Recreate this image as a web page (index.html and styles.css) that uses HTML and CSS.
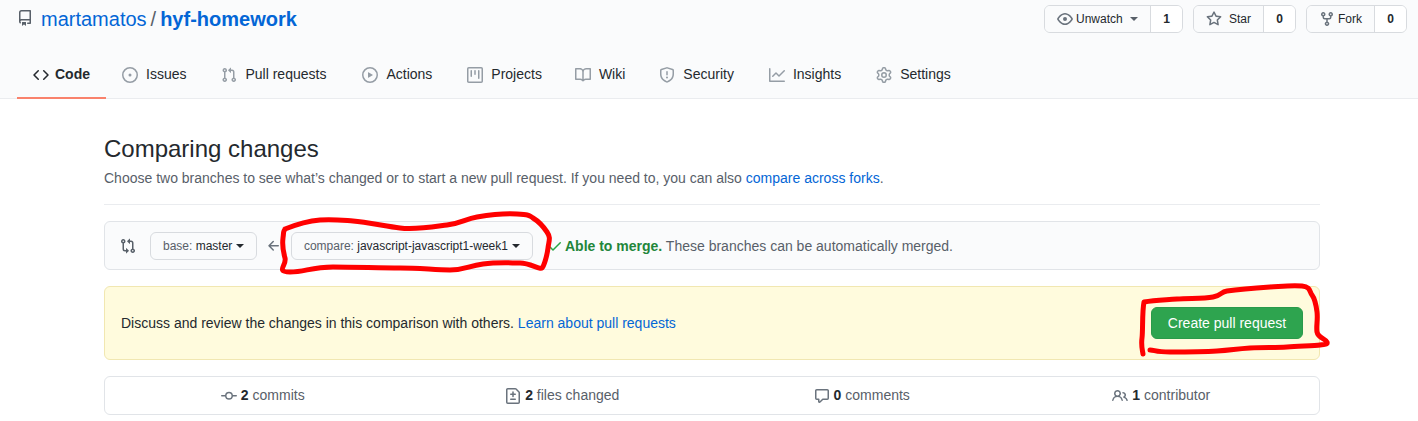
FILE: index.html
```html
<!DOCTYPE html>
<html lang="en">
<head>
<meta charset="utf-8">
<title>Comparing changes</title>
<link rel="stylesheet" href="styles.css">
</head>
<body>
<svg class="defs" width="0" height="0" aria-hidden="true">
  <symbol id="i-repo" viewBox="0 0 16 16"><path d="M2 2.5A2.5 2.5 0 014.5 0h8.75a.75.75 0 01.75.75v12.5a.75.75 0 01-.75.75h-2.5a.75.75 0 110-1.5h1.75v-2h-8a1 1 0 00-.714 1.7.75.75 0 01-1.072 1.05A2.495 2.495 0 012 11.5v-9zm10.5-1V9h-8c-.356 0-.694.074-1 .208V2.5a1 1 0 011-1h8zM5 12.25v3.25a.25.25 0 00.4.2l1.45-1.087a.25.25 0 01.3 0L8.6 15.7a.25.25 0 00.4-.2v-3.25a.25.25 0 00-.25-.25h-3.5a.25.25 0 00-.25.25z"/></symbol>
  <symbol id="i-code" viewBox="0 0 16 16"><path d="M4.72 3.22a.75.75 0 011.06 1.06L2.06 8l3.72 3.72a.75.75 0 11-1.06 1.06L.47 8.53a.75.75 0 010-1.06l4.25-4.25zm6.56 0a.75.75 0 10-1.06 1.06L13.94 8l-3.72 3.72a.75.75 0 101.06 1.06l4.25-4.25a.75.75 0 000-1.06l-4.25-4.25z"/></symbol>
  <symbol id="i-issue" viewBox="0 0 16 16"><path d="M8 9.5a1.5 1.5 0 100-3 1.5 1.5 0 000 3z"/><path d="M8 0a8 8 0 100 16A8 8 0 008 0zM1.5 8a6.5 6.5 0 1113 0 6.5 6.5 0 01-13 0z"/></symbol>
  <symbol id="i-pr" viewBox="0 0 16 16"><path d="M7.177 3.073L9.573.677A.25.25 0 0110 .854v4.792a.25.25 0 01-.427.177L7.177 3.427a.25.25 0 010-.354zM3.75 2.5a.75.75 0 100 1.5.75.75 0 000-1.5zm-2.25.75a2.25 2.25 0 113 2.122v5.256a2.251 2.251 0 11-1.5 0V5.372A2.25 2.25 0 011.5 3.25zM11 2.5h-1V4h1a1 1 0 011 1v5.628a2.251 2.251 0 101.5 0V5A2.5 2.5 0 0011 2.5zm1 10.25a.75.75 0 111.5 0 .75.75 0 01-1.5 0zM3.75 12a.75.75 0 100 1.5.75.75 0 000-1.5z"/></symbol>
  <symbol id="i-play" viewBox="0 0 16 16"><path d="M1.5 8a6.5 6.5 0 1113 0 6.5 6.5 0 01-13 0zM8 0a8 8 0 100 16A8 8 0 008 0zM6.379 5.227A.25.25 0 006 5.442v5.117a.25.25 0 00.379.214l4.264-2.559a.25.25 0 000-.428L6.379 5.227z"/></symbol>
  <symbol id="i-project" viewBox="0 0 16 16"><path d="M1.75 0A1.75 1.75 0 000 1.75v12.5C0 15.216.784 16 1.75 16h12.5A1.75 1.75 0 0016 14.25V1.75A1.75 1.75 0 0014.25 0H1.75zM1.5 1.75a.25.25 0 01.25-.25h12.5a.25.25 0 01.25.25v12.5a.25.25 0 01-.25.25H1.75a.25.25 0 01-.25-.25V1.75zM11.75 3a.75.75 0 00-.75.75v7.5a.75.75 0 001.5 0v-7.5a.75.75 0 00-.75-.75zm-8.25.75a.75.75 0 011.5 0v5.5a.75.75 0 01-1.5 0v-5.5zM8 3a.75.75 0 00-.75.75v3.5a.75.75 0 001.5 0v-3.5A.75.75 0 008 3z"/></symbol>
  <symbol id="i-book" viewBox="0 0 16 16"><path d="M0 1.75A.75.75 0 01.75 1h4.253c1.227 0 2.317.59 3 1.501A3.744 3.744 0 0111.006 1h4.245a.75.75 0 01.75.75v10.5a.75.75 0 01-.75.75h-4.507a2.25 2.25 0 00-1.591.659l-.622.621a.75.75 0 01-1.06 0l-.622-.621A2.25 2.25 0 005.258 13H.75a.75.75 0 01-.75-.75V1.75zm8.755 3a2.25 2.25 0 012.25-2.25H14.5v9h-3.757c-.71 0-1.4.201-1.992.572l.004-7.322zm-1.504 7.324l.004-5.073-.002-2.253A2.25 2.25 0 005.003 2.5H1.5v9h3.757a3.75 3.75 0 011.994.574z"/></symbol>
  <symbol id="i-shield" viewBox="0 0 16 16"><path d="M7.467.133a1.75 1.75 0 011.066 0l5.25 1.68A1.75 1.75 0 0115 3.48V7c0 1.566-.32 3.182-1.303 4.682-.983 1.498-2.585 2.813-5.032 3.855a1.7 1.7 0 01-1.33 0c-2.447-1.042-4.049-2.357-5.032-3.855C1.32 10.182 1 8.566 1 7V3.48a1.75 1.75 0 011.217-1.667l5.25-1.68zm.61 1.429a.25.25 0 00-.153 0l-5.25 1.68a.25.25 0 00-.174.238V7c0 1.358.275 2.666 1.057 3.86.784 1.194 2.121 2.34 4.366 3.297a.2.2 0 00.154 0c2.245-.956 3.582-2.104 4.366-3.298C13.225 9.666 13.5 8.36 13.5 7V3.48a.25.25 0 00-.174-.237l-5.25-1.68zM9 10.5a1 1 0 11-2 0 1 1 0 012 0zm-.25-5.75a.75.75 0 10-1.5 0v3a.75.75 0 001.5 0v-3z"/></symbol>
  <symbol id="i-graph" viewBox="0 0 16 16"><path d="M1.5 1.75a.75.75 0 00-1.5 0v12.5c0 .414.336.75.75.75h14.5a.75.75 0 000-1.5H1.5V1.75zm14.28 2.53a.75.75 0 00-1.06-1.06L10 7.94 7.53 5.47a.75.75 0 00-1.06 0L3.22 8.72a.75.75 0 001.06 1.06L7 7.06l2.47 2.47a.75.75 0 001.06 0l5.25-5.25z"/></symbol>
  <symbol id="i-gear" viewBox="0 0 16 16"><path d="M7.429 1.525a6.593 6.593 0 011.142 0c.036.003.108.036.137.146l.289 1.105c.147.56.55.967.997 1.189.174.086.341.183.501.29.417.278.97.423 1.53.27l1.102-.303c.11-.03.175.016.195.046.219.31.41.641.573.989.014.031.022.11-.059.19l-.815.806c-.411.406-.562.957-.53 1.456a4.588 4.588 0 010 .582c-.032.499.119 1.05.53 1.456l.815.806c.08.08.073.159.059.19a6.494 6.494 0 01-.573.99c-.02.029-.086.074-.195.045l-1.103-.303c-.559-.153-1.112-.008-1.529.27-.16.107-.327.204-.5.29-.449.222-.851.628-.998 1.189l-.289 1.105c-.029.11-.101.143-.137.146a6.613 6.613 0 01-1.142 0c-.036-.003-.108-.037-.137-.146l-.289-1.105c-.147-.56-.55-.967-.997-1.189a4.502 4.502 0 01-.501-.29c-.417-.278-.97-.423-1.53-.27l-1.102.303c-.11.03-.175-.016-.195-.046a6.492 6.492 0 01-.573-.989c-.014-.031-.022-.11.059-.19l.815-.806c.411-.406.562-.957.53-1.456a4.587 4.587 0 010-.582c.032-.499-.119-1.05-.53-1.456l-.815-.806c-.08-.08-.073-.159-.059-.19a6.44 6.44 0 01.573-.99c.02-.029.086-.075.195-.045l1.103.303c.559.153 1.112.008 1.529-.27.16-.107.327-.204.5-.29.449-.222.851-.628.998-1.189l.289-1.105c.029-.11.101-.143.137-.146zM8 0c-.236 0-.47.01-.701.03-.743.065-1.29.615-1.458 1.261l-.29 1.106c-.017.066-.078.158-.211.224a5.994 5.994 0 00-.668.386c-.123.082-.233.09-.3.071L3.27 2.776c-.644-.177-1.392.02-1.82.63a7.977 7.977 0 00-.704 1.217c-.315.675-.111 1.422.363 1.891l.815.806c.05.048.098.147.088.294a6.084 6.084 0 000 .772c.01.147-.038.246-.088.294l-.815.806c-.474.469-.678 1.216-.363 1.891.2.428.436.835.704 1.218.428.609 1.176.806 1.82.63l1.103-.303c.066-.019.176-.011.299.071.213.143.436.272.668.386.133.066.194.158.212.224l.289 1.106c.169.646.715 1.196 1.458 1.26a8.094 8.094 0 001.402 0c.743-.064 1.29-.614 1.458-1.26l.29-1.106c.017-.066.078-.158.211-.224a5.98 5.98 0 00.668-.386c.123-.082.233-.09.3-.071l1.102.302c.644.177 1.392-.02 1.82-.63.268-.382.505-.789.704-1.217.315-.675.111-1.422-.364-1.891l-.814-.806c-.05-.048-.098-.147-.088-.294a6.1 6.1 0 000-.772c-.01-.147.039-.246.088-.294l.814-.806c.475-.469.679-1.216.364-1.891a7.992 7.992 0 00-.704-1.218c-.428-.609-1.176-.806-1.82-.63l-1.103.303c-.066.019-.176.011-.299-.071a5.991 5.991 0 00-.668-.386c-.133-.066-.194-.158-.212-.224L10.16 1.29C9.99.645 9.444.095 8.701.031A8.094 8.094 0 008 0zm1.5 8a1.5 1.5 0 11-3 0 1.5 1.5 0 013 0zM11 8a3 3 0 11-6 0 3 3 0 016 0z"/></symbol>
  <symbol id="i-eye" viewBox="0 0 16 16"><path d="M1.679 7.932c.412-.621 1.242-1.75 2.366-2.717C5.175 4.242 6.527 3.5 8 3.5c1.473 0 2.824.742 3.955 1.715 1.124.967 1.954 2.096 2.366 2.717a.119.119 0 010 .136c-.412.621-1.242 1.75-2.366 2.717C10.825 11.758 9.473 12.5 8 12.5c-1.473 0-2.824-.742-3.955-1.715C2.92 9.818 2.09 8.69 1.679 8.068a.119.119 0 010-.136zM8 2c-1.981 0-3.67.992-4.933 2.078C1.797 5.169.88 6.423.43 7.1a1.619 1.619 0 000 1.798c.45.678 1.367 1.932 2.637 3.024C4.329 13.008 6.019 14 8 14c1.981 0 3.67-.992 4.933-2.078 1.27-1.091 2.187-2.345 2.637-3.023a1.619 1.619 0 000-1.798c-.45-.678-1.367-1.932-2.637-3.023C11.671 2.992 9.981 2 8 2zm0 8a2 2 0 100-4 2 2 0 000 4z"/></symbol>
  <symbol id="i-star" viewBox="0 0 16 16"><path d="M8 .25a.75.75 0 01.673.418l1.882 3.815 4.21.612a.75.75 0 01.416 1.279l-3.046 2.97.719 4.192a.75.75 0 01-1.088.791L8 12.347l-3.766 1.98a.75.75 0 01-1.088-.79l.72-4.194L.818 6.374a.75.75 0 01.416-1.28l4.21-.611L7.327.668A.75.75 0 018 .25zm0 2.445L6.615 5.5a.75.75 0 01-.564.41l-3.097.45 2.24 2.184a.75.75 0 01.216.664l-.528 3.084 2.769-1.456a.75.75 0 01.698 0l2.77 1.456-.53-3.084a.75.75 0 01.216-.664l2.24-2.183-3.096-.45a.75.75 0 01-.564-.41L8 2.694v.001z"/></symbol>
  <symbol id="i-fork" viewBox="0 0 16 16"><path d="M5 3.25a.75.75 0 11-1.5 0 .75.75 0 011.5 0zm0 2.122a2.25 2.25 0 10-1.5 0v.878A2.25 2.25 0 005.75 8.5h1.5v2.128a2.251 2.251 0 101.5 0V8.5h1.5a2.25 2.25 0 002.25-2.25v-.878a2.25 2.25 0 10-1.5 0v.878a.75.75 0 01-.75.75h-4.5A.75.75 0 015 6.25v-.878zm3.75 7.378a.75.75 0 11-1.5 0 .75.75 0 011.5 0zm3-8.75a.75.75 0 100-1.5.75.75 0 000 1.5z"/></symbol>
  <symbol id="i-compare" viewBox="0 0 16 16"><path d="M9.573.677L7.177 3.073a.25.25 0 000 .354l2.396 2.396A.25.25 0 0010 5.646V4h1a1 1 0 011 1v5.628a2.251 2.251 0 101.5 0V5A2.5 2.5 0 0011 2.5h-1V.854a.25.25 0 00-.427-.177zM6 12v-1.646a.25.25 0 01.427-.177l2.396 2.396a.25.25 0 010 .354l-2.396 2.396A.25.25 0 016 15.146V13.5H5A2.5 2.5 0 012.5 11V5.372a2.25 2.25 0 111.5 0V11a1 1 0 001 1h1zm6.75 0a.75.75 0 100 1.5.75.75 0 000-1.5zM4 3.25a.75.75 0 10-1.5 0 .75.75 0 001.5 0z"/></symbol>
  <symbol id="i-arrow" viewBox="0 0 16 16"><path d="M7.78 12.53a.75.75 0 01-1.06 0L2.47 8.28a.75.75 0 010-1.06l4.25-4.25a.75.75 0 011.06 1.06L4.81 7h7.44a.75.75 0 010 1.5H4.81l2.97 2.97a.75.75 0 010 1.06z"/></symbol>
  <symbol id="i-check" viewBox="0 0 16 16"><path d="M13.78 4.22a.75.75 0 010 1.06l-7.25 7.25a.75.75 0 01-1.06 0L2.22 9.28a.75.75 0 011.06-1.06L6 10.94l6.72-6.72a.75.75 0 011.06 0z"/></symbol>
  <symbol id="i-commit" viewBox="0 0 16 16"><path d="M10.5 7.75a2.5 2.5 0 11-5 0 2.5 2.5 0 015 0zm1.43.75a4.002 4.002 0 01-7.86 0H.75a.75.75 0 110-1.5h3.32a4.001 4.001 0 017.86 0h3.32a.75.75 0 110 1.5h-3.32z"/></symbol>
  <symbol id="i-diff" viewBox="0 0 16 16"><path d="M1 1.75C1 .784 1.784 0 2.75 0h7.586c.464 0 .909.184 1.237.513l2.914 2.914c.329.328.513.773.513 1.237v9.586A1.75 1.75 0 0113.25 16H2.75A1.75 1.75 0 011 14.25V1.75zm1.75-.25a.25.25 0 00-.25.25v12.5c0 .138.112.25.25.25h10.5a.25.25 0 00.25-.25V4.664a.25.25 0 00-.073-.177l-2.914-2.914a.25.25 0 00-.177-.073H2.75zM8 3.25a.75.75 0 01.75.75v1.5h1.5a.75.75 0 010 1.5h-1.5v1.5a.75.75 0 01-1.5 0V7h-1.5a.75.75 0 010-1.5h1.5V4A.75.75 0 018 3.25zm-3 8a.75.75 0 01.75-.75h4.5a.75.75 0 010 1.5h-4.5a.75.75 0 01-.75-.75z"/></symbol>
  <symbol id="i-comment" viewBox="0 0 16 16"><path d="M2.75 2.5a.25.25 0 00-.25.25v7.5c0 .138.112.25.25.25h2a.75.75 0 01.75.75v2.19l2.72-2.72a.75.75 0 01.53-.22h4.5a.25.25 0 00.25-.25v-7.5a.25.25 0 00-.25-.25H2.75zM1 2.75C1 1.784 1.784 1 2.75 1h10.5c.966 0 1.75.784 1.75 1.75v7.5A1.75 1.75 0 0113.25 12H9.06l-2.573 2.573A1.457 1.457 0 014 13.543V12H2.75A1.75 1.75 0 011 10.25v-7.5z"/></symbol>
  <symbol id="i-people" viewBox="0 0 16 16"><path d="M5.5 3.5a2 2 0 100 4 2 2 0 000-4zM2 5.5a3.5 3.5 0 115.898 2.549 5.507 5.507 0 013.034 4.084.75.75 0 11-1.482.235 4.001 4.001 0 00-7.9 0 .75.75 0 01-1.482-.236A5.507 5.507 0 013.102 8.05 3.49 3.49 0 012 5.5zM11 4a.75.75 0 100 1.5 1.5 1.5 0 01.666 2.844.75.75 0 00-.416.672v.352a.75.75 0 00.574.73c1.2.289 2.162 1.2 2.522 2.372a.75.75 0 101.434-.44 5.01 5.01 0 00-2.56-3.012A3 3 0 0011 4z"/></symbol>
</svg>

<header class="repohead">
  <div class="repo-row">
    <h1 class="repo-title">
      <svg class="ico repo-ico"><use href="#i-repo"/></svg>
      <a class="owner" href="#">martamatos</a>
      <span class="slash">/</span>
      <a class="repo-name" href="#">hyf-homework</a>
    </h1>
    <div class="actions">
      <div class="counter-btn btn-watch">
        <span class="cb-main"><svg class="ico"><use href="#i-eye"/></svg><span class="cb-label">Unwatch</span><i class="caret caret-watch"></i></span>
        <span class="cb-count">1</span>
      </div>
      <div class="counter-btn btn-star">
        <span class="cb-main"><svg class="ico"><use href="#i-star"/></svg><span class="cb-label">Star</span></span>
        <span class="cb-count">0</span>
      </div>
      <div class="counter-btn btn-fork">
        <span class="cb-main"><svg class="ico"><use href="#i-fork"/></svg><span class="cb-label">Fork</span></span>
        <span class="cb-count">0</span>
      </div>
    </div>
  </div>
  <nav class="tabs">
    <a class="tab tab-active" href="#"><svg class="ico"><use href="#i-code"/></svg>Code</a>
    <a class="tab" href="#"><svg class="ico"><use href="#i-issue"/></svg>Issues</a>
    <a class="tab tab-wide" href="#"><svg class="ico"><use href="#i-pr"/></svg>Pull requests</a>
    <a class="tab" href="#"><svg class="ico"><use href="#i-play"/></svg>Actions</a>
    <a class="tab tab-tight" href="#"><svg class="ico"><use href="#i-project"/></svg>Projects</a>
    <a class="tab tab-snug" href="#"><svg class="ico"><use href="#i-book"/></svg>Wiki</a>
    <a class="tab" href="#"><svg class="ico"><use href="#i-shield"/></svg>Security</a>
    <a class="tab" href="#"><svg class="ico"><use href="#i-graph"/></svg>Insights</a>
    <a class="tab" href="#"><svg class="ico"><use href="#i-gear"/></svg>Settings</a>
  </nav>
</header>

<main class="content">
  <div class="subhead">
    <h2 class="subhead-title">Comparing changes</h2>
    <p class="subhead-desc">Choose two branches to see what’s changed or to start a new pull request. If you need to, you can also <a href="#">compare across forks</a>.</p>
  </div>

  <div class="range">
    <svg class="ico range-ico"><use href="#i-compare"/></svg>
    <span class="select-btn"><span class="pre">base:</span> master<i class="caret"></i></span>
    <svg class="ico arrow-ico"><use href="#i-arrow"/></svg>
    <span class="select-btn"><span class="pre">compare:</span> javascript-javascript1-week1<i class="caret"></i></span>
    <span class="merge"><svg class="ico check-ico"><use href="#i-check"/></svg><strong>Able to merge.</strong> These branches can be automatically merged.</span>
  </div>

  <div class="notice">
    <p>Discuss and review the changes in this comparison with others. <a href="#">Learn about pull requests</a></p>
    <a class="create-btn" href="#">Create pull request</a>
  </div>

  <div class="stats">
    <span class="stat"><svg class="ico"><use href="#i-commit"/></svg><b>2</b> commits</span>
    <span class="stat"><svg class="ico"><use href="#i-diff"/></svg><b>2</b> files changed</span>
    <span class="stat"><svg class="ico"><use href="#i-comment"/></svg><b>0</b> comments</span>
    <span class="stat"><svg class="ico"><use href="#i-people"/></svg><b>1</b> contributor</span>
  </div>
</main>

<svg class="scribbles" width="1418" height="421" viewBox="0 0 1418 421" aria-hidden="true">
  <path d="M285 229C295 225 308 221 320 220S340 220 353 221 385 226 400 228 432 227 447 225 465 219 477 217 503 213 517 214 528 215 533 218 543 226 547 232 549 240 548 248 544 266 542 268 530 263 520 263 498 262 483 264 465 270 450 270 420 268 400 268 355 267 333 267 305 272 290 272 287 265 285 258 282 246 283 238 283 233 285 229"/>
  <path d="M1143 354C1142 348 1141 345 1142 338S1142 312 1144 302C1155 300 1165 300 1177 299S1203 299 1213 297 1220 292 1227 291 1255 288 1270 287 1293 285 1302 286 1309 291 1312 295 1316 304 1317 312 1316 326 1317 332 1326 339 1327 342 1325 344 1320 345 1300 346 1287 347 1265 347 1250 348 1232 350 1217 351 1185 352 1170 352 1155 350 1150 350"/>
</svg>
</body>
</html>
```

FILE: styles.css
```css
* { box-sizing: border-box; }

html, body { margin: 0; padding: 0; }

body {
  width: 1418px;
  height: 421px;
  overflow: hidden;
  background: #fff;
  color: #24292e;
  font-family: "Liberation Sans", Arial, sans-serif;
  font-size: 14px;
  line-height: 1.5;
}

a { color: #0366d6; text-decoration: none; }
p, h1, h2 { margin: 0; font-weight: 400; }

.defs { position: absolute; }

.ico {
  display: inline-block;
  flex: none;
  width: 16px;
  height: 16px;
  fill: #6a737d;
  fill-rule: evenodd;
}

/* repo header */
.repohead {
  height: 99px;
  background: #fafbfc;
  border-bottom: 1px solid #eaecef;
}

.repo-row {
  display: flex;
  justify-content: space-between;
  align-items: flex-start;
  height: 50px;
  padding: 5px 11px 0 17px;
}

.repo-title {
  display: flex;
  align-items: center;
  height: 28px;
  font-size: 20px;
  line-height: 28px;
}

.repo-ico { fill: #586069; margin: -2px 8px 0 0; }
.slash { margin: 0 4px; color: #586069; }
.repo-name { font-weight: 700; }

.actions { display: flex; gap: 10px; }

.counter-btn {
  display: flex;
  height: 28px;
  font-size: 12px;
  line-height: 26px;
  border: 1px solid #d8dbdf;
  border-radius: 6px;
}

.cb-main {
  display: flex;
  align-items: center;
  padding-left: 12px;
  background: #fafbfc;
  color: #24292e;
  border-radius: 5px 0 0 5px;
  border-right: 1px solid #d8dbdf;
}

.cb-count {
  display: block;
  width: 31px;
  text-align: center;
  font-weight: 700;
  background: #fff;
  border-radius: 0 5px 5px 0;
}

.btn-watch .cb-main { width: 106px; }
.btn-star .cb-main { width: 70px; }
.btn-fork .cb-main { width: 68px; }

.btn-watch .cb-label { margin-left: 3px; }
.btn-star .cb-label { margin-left: 7px; }
.btn-fork .cb-label { margin-left: 3px; }

.caret {
  display: inline-block;
  width: 0;
  height: 0;
  margin-left: 4px;
  border-style: solid;
  border-width: 4px 4px 0;
  border-color: #24292e transparent transparent;
}

.caret-watch { margin-left: 7px; border-color: #586069 transparent transparent; }

/* tabs */
.tabs {
  display: flex;
  height: 49px;
  padding-left: 17px;
}

.tab {
  display: flex;
  align-items: center;
  height: 49px;
  margin-right: 3px;
  padding: 2px 16px 0;
  color: #24292e;
  border-bottom: 2px solid transparent;
}

.tab .ico { margin-right: 8px; fill: #959da5; }

.tab-wide { margin-right: 4px; }
.tab-tight { margin-right: 1px; }
.tab-snug { margin-right: 2px; }

.tab-active {
  margin-right: 0;
  font-weight: 700;
  border-bottom-color: #f9826c;
}

.tab-active .ico { fill: #24292e; margin-right: 6px; }

/* main */
.content {
  width: 1216px;
  margin-left: 104px;
  padding-top: 32px;
}

.subhead {
  height: 74px;
  border-bottom: 1px solid #eaecef;
}

.subhead-title {
  font-size: 24px;
  line-height: 36px;
}

.subhead-desc {
  color: #586069;
  line-height: 21px;
  margin-top: 1px;
}

.range {
  display: flex;
  align-items: center;
  height: 49px;
  margin-top: 16px;
  padding-left: 15px;
  background: #fafbfc;
  border: 1px solid #e1e4e8;
  border-radius: 6px;
}

.range-ico { fill: #586069; margin-right: 14px; }

.select-btn {
  display: flex;
  align-items: center;
  height: 28px;
  padding: 0 12px;
  font-size: 12px;
  white-space: pre;
  color: #24292e;
  background: #fafbfc;
  border: 1px solid #d8dbdf;
  border-radius: 6px;
}

.pre { color: #586069; }

.arrow-ico { margin: 0 8.5px 0 9px; }

.merge {
  display: flex;
  align-items: center;
  margin-left: 16px;
  padding-top: 1px;
  color: #586069;
  white-space: pre;
}

.check-ico { fill: #28a745; margin: 0 1.5px 0 -1.5px; }
.merge strong { color: #22863a; }

.notice {
  display: flex;
  justify-content: space-between;
  align-items: center;
  height: 74px;
  margin-top: 16px;
  padding: 0 16px;
  background: #fffbdd;
  border: 1px solid #f1e7b1;
  border-radius: 6px;
}

.create-btn {
  display: block;
  width: 152px;
  height: 32px;
  text-align: center;
  line-height: 30px;
  color: #fff;
  background: #2ea44f;
  border: 1px solid #2a9a4a;
  border-radius: 6px;
}

.stats {
  display: grid;
  grid-template-columns: repeat(4, 1fr);
  height: 39px;
  margin-top: 16px;
  padding: 0 8px;
  border: 1px solid #e1e4e8;
  border-radius: 6px;
}

.stat {
  display: flex;
  justify-content: center;
  align-items: center;
  white-space: pre;
  color: #586069;
}

.stat .ico { margin-right: 4px; }
.stat b { color: #24292e; }

/* hand-drawn annotations over the screenshot */
.scribbles {
  position: absolute;
  left: 0;
  top: 0;
  fill: none;
  stroke: #f00;
  stroke-width: 5;
  stroke-linecap: round;
  stroke-linejoin: round;
  pointer-events: none;
}
```
